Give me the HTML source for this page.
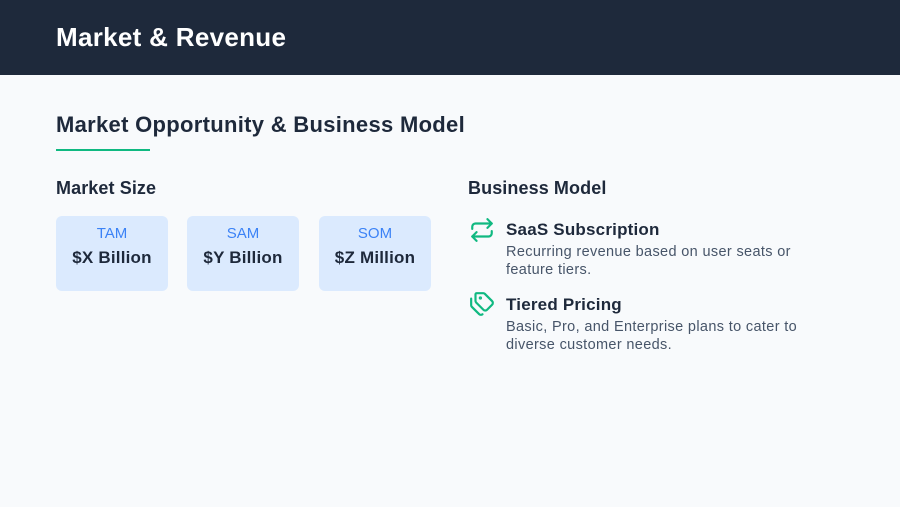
<!DOCTYPE html>
<html><head><meta charset="utf-8"><style>
*{margin:0;padding:0;box-sizing:border-box}
body{width:900px;height:507px;background:#f8fafc;font-family:"Liberation Sans",sans-serif;position:relative;overflow:hidden;color:#1e293b}
.hdr{position:absolute;left:0;top:0;width:900px;height:75px;background:#1e293b}
.hdr h1{position:absolute;left:56px;top:22px;font-size:26px;font-weight:bold;color:#fff;letter-spacing:0.3px}
.t{position:absolute;left:56px;top:112px;font-size:22px;font-weight:bold;color:#1e293b;letter-spacing:0.3px}
.ul{position:absolute;left:56px;top:149px;width:94px;height:2px;background:#10b981}
.h3{position:absolute;top:178px;font-size:18px;font-weight:bold;color:#1e293b;letter-spacing:0.1px}
.card{position:absolute;top:216px;width:112px;height:75px;background:#dbeafe;border-radius:6px;text-align:center}
.card .a{margin-top:9px;font-size:15px;color:#3b82f6}
.card .b{margin-top:6px;font-size:17px;font-weight:bold;color:#1e293b;letter-spacing:0.2px}
.it{position:absolute;left:506px;font-size:17px;font-weight:bold;letter-spacing:0.2px}
.d{position:absolute;left:506px;font-size:14.5px;color:#475569;line-height:18px;width:305px;letter-spacing:0.35px}
svg{position:absolute}
</style></head><body>
<div class="hdr"><h1>Market &amp; Revenue</h1></div>
<div class="t">Market Opportunity &amp; Business Model</div>
<div class="ul"></div>
<div class="h3" style="left:56px">Market Size</div>
<div class="h3" style="left:468px">Business Model</div>
<div class="card" style="left:56px"><div class="a">TAM</div><div class="b">$X Billion</div></div>
<div class="card" style="left:187px"><div class="a">SAM</div><div class="b">$Y Billion</div></div>
<div class="card" style="left:319px"><div class="a">SOM</div><div class="b">$Z Million</div></div>
<svg style="left:469px;top:217px" width="26" height="26" viewBox="0 0 24 24" fill="none" stroke="#10b981" stroke-width="2" stroke-linecap="round" stroke-linejoin="round"><path d="M17 2l4 4-4 4"/><path d="M3 11V9a3 3 0 0 1 3-3h15"/><path d="M7 22l-4-4 4-4"/><path d="M21 13v2a3 3 0 0 1-3 3H3"/></svg>
<div class="it" style="top:220px">SaaS Subscription</div>
<div class="d" style="top:243px">Recurring revenue based on user seats or feature tiers.</div>
<svg style="left:469px;top:291px" width="26" height="26" viewBox="0 0 24 24" fill="none" stroke="#10b981" stroke-width="2" stroke-linecap="round" stroke-linejoin="round"><path d="M13.172 2a2 2 0 0 1 1.414.586l6.71 6.71a2.4 2.4 0 0 1 0 3.408l-4.592 4.592a2.4 2.4 0 0 1-3.408 0l-6.71-6.71A2 2 0 0 1 6 9.172V3a1 1 0 0 1 1-1z"/><path d="M2 7v6.172a2 2 0 0 0 .586 1.414l6.71 6.71a2.4 2.4 0 0 0 3.191.193"/><circle cx="10.5" cy="6.5" r=".5" fill="#10b981"/></svg>
<div class="it" style="top:295px">Tiered Pricing</div>
<div class="d" style="top:318px">Basic, Pro, and Enterprise plans to cater to diverse customer needs.</div>
</body></html>
